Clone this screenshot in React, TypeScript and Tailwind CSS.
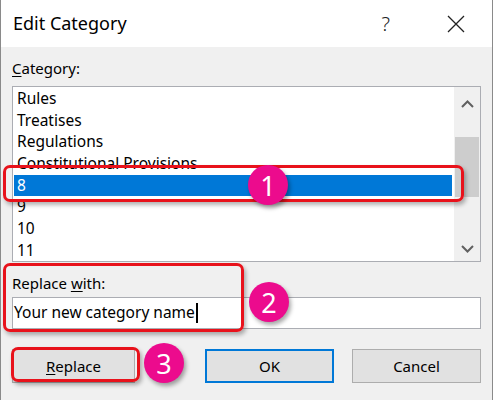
const items = ["Rules", "Treatises", "Regulations", "Constitutional Provisions", "8", "9", "10", "11"];

function Marker({ n, className }: { n: number; className: string }) {
  return (
    <div
      className={`absolute flex h-[40px] w-[40px] items-center justify-center rounded-full bg-[#ec0b8d] text-[27px] leading-none text-white shadow-[2px_3px_4px_rgba(0,0,0,0.35)] ${className}`}
    >
      {n}
    </div>
  );
}

function Chevron({ up }: { up?: boolean }) {
  return (
    <svg width="13" height="8" viewBox="0 0 13 8">
      <path
        d={up ? "M1 7 L6.5 1.5 L12 7" : "M1 1 L6.5 6.5 L12 1"}
        stroke="#606060"
        strokeWidth="2"
        fill="none"
      />
    </svg>
  );
}

export default function App() {
  return (
    <div
      className="relative h-[400px] w-[493px] overflow-hidden border-x border-[#8a8a8a] bg-[#f0f0f0] text-[#000]"
      style={{ fontFamily: '"Noto Sans", "Open Sans", sans-serif' }}
    >
      {/* title bar */}
      <div className="flex h-[47px] items-center bg-white pl-[12px]">
        <span className="text-[18px]">Edit Category</span>
        <span className="ml-auto mr-[57px] text-[20px] font-light text-[#222]">?</span>
        <svg width="18" height="18" viewBox="0 0 18 18" className="mr-[27px]">
          <path d="M1 1 L17 17 M17 1 L1 17" stroke="#222" strokeWidth="1.3" fill="none" />
        </svg>
      </div>

      <div className="px-[11px]">
        <div className="mt-[11px] h-[28px] text-[15px] leading-[20px]">
          <span className="underline underline-offset-2">C</span>ategory:
        </div>

        {/* list box */}
        <div className="flex h-[176px] border border-[#abadb3] bg-white">
          <div className="flex-1 p-[1px] pr-[2px]">
            {items.map((it) => (
              <div
                key={it}
                className={`h-[21.7px] pl-[3px] text-[15.5px] leading-[21.7px] ${
                  it === "8" ? "bg-[#0078d7] text-white" : ""
                }`}
              >
                {it}
              </div>
            ))}
          </div>
          <div className="flex w-[26px] flex-col items-center bg-[#f0f0f0]">
            <div className="flex h-[34px] items-center justify-center">
              <Chevron up />
            </div>
            <div className="mt-[16px] h-[60px] w-[24px] bg-[#cdcdcd]" />
            <div className="mt-auto flex h-[24px] items-center justify-center">
              <Chevron />
            </div>
          </div>
        </div>

        <div className="mt-[11px] h-[24px] text-[15px] leading-[20px]">
          Replace <span className="underline underline-offset-2">w</span>ith:
        </div>
        <div className="flex h-[32px] items-center border border-[#abadb3] bg-white pl-[1px] text-[15.5px]">
          Your new category name
          <span className="ml-[1px] inline-block h-[20px] w-[2px] bg-black" />
        </div>

        <div className="mt-[20px] flex h-[34px] items-stretch">
          <div className="flex w-[123px] items-center justify-center border border-[#adadad] bg-[#e1e1e1] text-[15px]">
            <span>
              <span className="underline underline-offset-2">R</span>eplace
            </span>
          </div>
          <div className="ml-[70px] flex w-[129px] items-center justify-center border-2 border-[#0078d7] bg-[#e1e1e1] text-[15px]">
            OK
          </div>
          <div className="ml-[18px] flex w-[129px] items-center justify-center border border-[#adadad] bg-[#e1e1e1] text-[15px]">
            Cancel
          </div>
        </div>
      </div>

      {/* annotations */}
      <div className="absolute left-[2px] top-[165px] h-[37px] w-[461px] rounded-[7px] border-[3px] border-[#e8121b] shadow-[2px_3px_4px_rgba(0,0,0,0.3)]" />
      <div className="absolute left-[2px] top-[263px] h-[69px] w-[241px] rounded-[7px] border-[3px] border-[#e8121b] shadow-[2px_3px_4px_rgba(0,0,0,0.3)]" />
      <div className="absolute left-[10px] top-[347px] h-[35px] w-[129px] rounded-[7px] border-[3px] border-[#e8121b] shadow-[2px_3px_4px_rgba(0,0,0,0.3)]" />
      <Marker n={1} className="left-[247px] top-[165px]" />
      <Marker n={2} className="left-[248px] top-[282px]" />
      <Marker n={3} className="left-[143px] top-[343px]" />
    </div>
  );
}
